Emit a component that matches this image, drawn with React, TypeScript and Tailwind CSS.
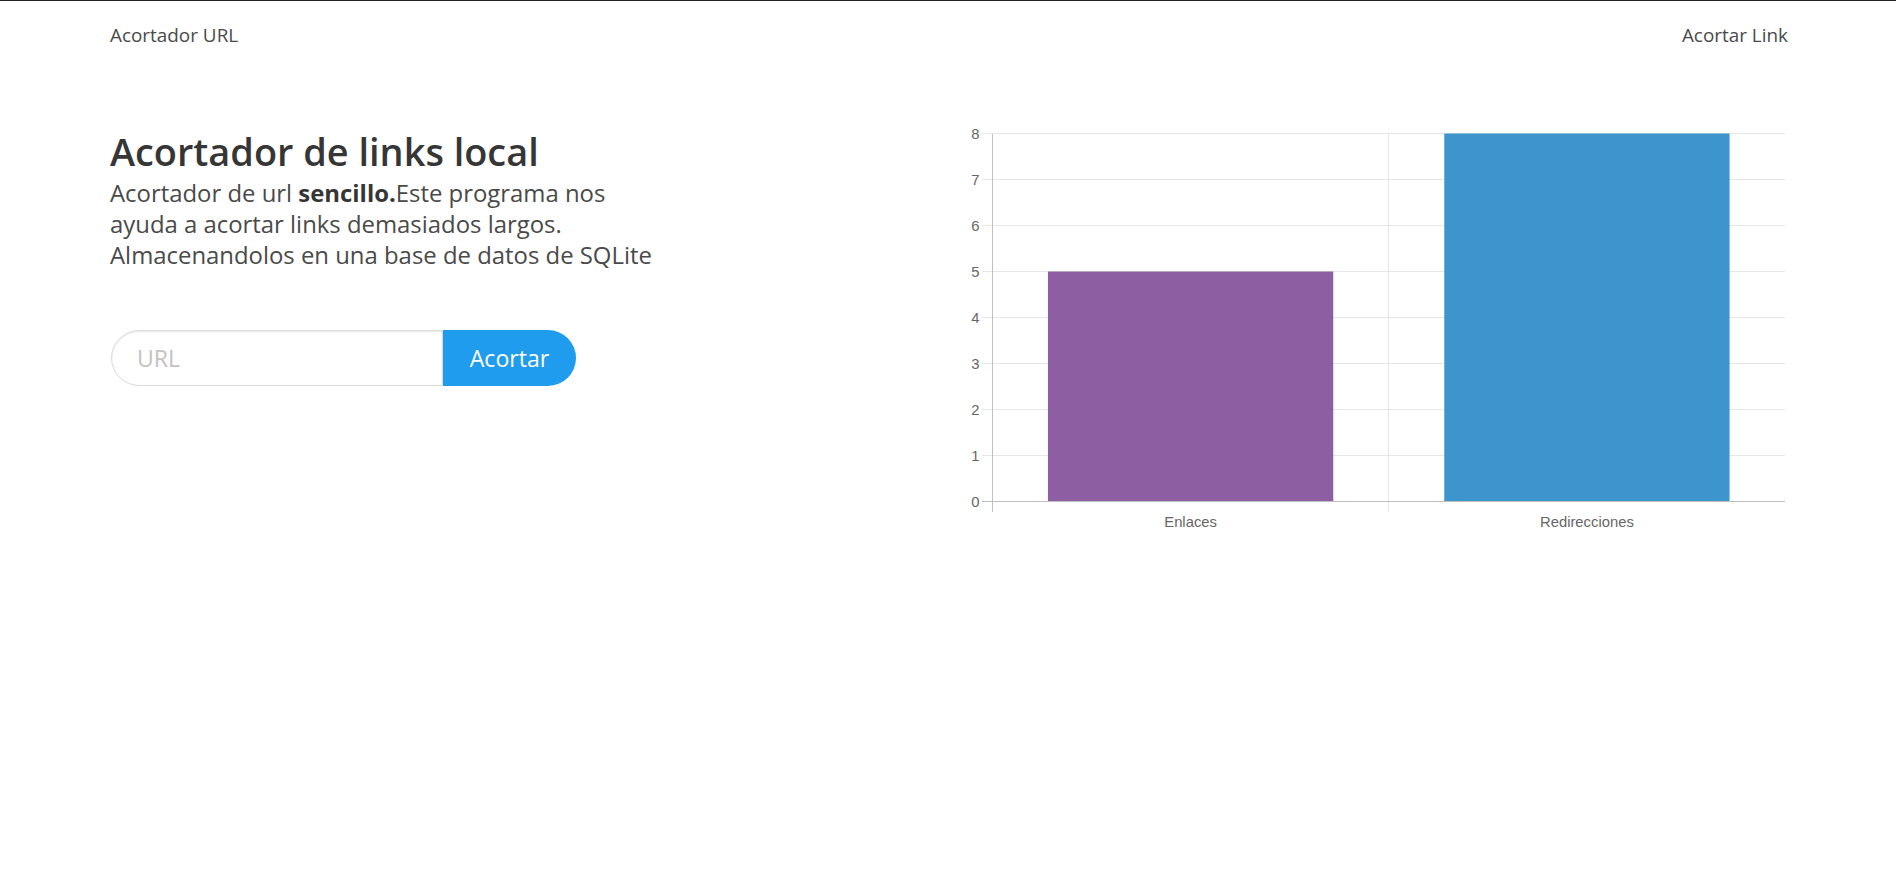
import React from "react";

const FONT = { fontFamily: '"Open Sans", "Noto Sans", sans-serif' };

function Chart() {
  const off = 10;
  const top = 3.5 + off;
  const bottom = 371.5 + off;
  const step = 46;
  const left = 44.5;
  const right = 837;
  const mid = 440.5;
  const ticks = [0, 1, 2, 3, 4, 5, 6, 7, 8];
  const barW = 285.3;
  const bars = [
    { label: "Enlaces", value: 5, color: "#8e5ea2", cx: 242.6 },
    { label: "Redirecciones", value: 8, color: "#3e95cd", cx: 638.9 },
  ];
  return (
    <svg width={840} height={420} viewBox="0 0 840 420" className="block">
      {ticks.map((k) => {
        const y = bottom - step * k;
        return (
          <line
            key={"h" + k}
            x1={34}
            x2={right}
            y1={y}
            y2={y}
            stroke={k === 0 ? "#bfbfbf" : "#e6e6e6"}
            strokeWidth={1}
            shapeRendering="crispEdges"
          />
        );
      })}
      <line x1={mid} x2={mid} y1={top} y2={bottom + 10.5} stroke="#e6e6e6" strokeWidth={1} shapeRendering="crispEdges" />
      {bars.map((b) => {
        const h = b.value * step;
        return (
          <rect
            key={b.label}
            x={b.cx - barW / 2}
            y={bottom - h}
            width={barW}
            height={h - 0.5}
            fill={b.color}
          />
        );
      })}
      <line x1={left} x2={left} y1={top} y2={bottom + 10.5} stroke="#bfbfbf" strokeWidth={1} shapeRendering="crispEdges" />
      <line x1={left} x2={right} y1={bottom} y2={bottom} stroke="#bfbfbf" strokeWidth={1} shapeRendering="crispEdges" />
      {ticks.map((k) => (
        <text
          key={"t" + k}
          x={31.5}
          y={bottom - step * k + 5.3}
          textAnchor="end"
          fill="#666"
          fontSize={14.8}
          fontFamily='"Liberation Sans", Arial, sans-serif'
        >
          {k}
        </text>
      ))}
      {bars.map((b) => (
        <text
          key={"l" + b.label}
          x={b.cx}
          y={397 + off}
          textAnchor="middle"
          fill="#666"
          fontSize={14.8}
          fontFamily='"Liberation Sans", Arial, sans-serif'
        >
          {b.label}
        </text>
      ))}
    </svg>
  );
}

export default function App() {
  return (
    <div className="min-h-screen w-full bg-white border-t border-[#222]" style={FONT}>
      <div className="mx-auto w-[1680px]">
        <nav className="flex items-center justify-between pt-[19px] text-[18.9px] leading-[30px] text-[#4a4a4a]">
          <a className="ml-[2px]">Acortador URL</a>
          <a>Acortar Link</a>
        </nav>
        <main className="mt-[70px] flex items-start">
          <section className="w-[840px] pl-[2px] pt-[10px]">
            <h1 className="text-[37.9px] font-semibold leading-[42px] text-[#363636]">
              Acortador de links local
            </h1>
            <p className="mt-[5px] text-[23.9px] leading-[31px] text-[#4a4a4a]">
              Acortador de url <strong className="font-bold text-[#363636]">sencillo.</strong>Este programa nos
              <br />
              ayuda a acortar links demasiados largos.
              <br />
              Almacenandolos en una base de datos de SQLite
            </p>
            <form className="mt-[60px] flex h-[56px] w-[465px] ml-[1px]" onSubmit={(e) => e.preventDefault()}>
              <input
                type="text"
                placeholder="URL"
                className="h-full w-[332px] rounded-l-full border border-[#dbdbdb] bg-white pl-[25px] text-[23.1px] text-[#363636] shadow-[inset_0_1px_2px_rgba(10,10,10,0.1)] outline-none placeholder:text-[#c2c2c2]"
                style={FONT}
              />
              <button
                type="submit"
                className="h-full w-[133px] rounded-r-full bg-[#209cee] text-[23.1px] text-white"
                style={FONT}
              >
                Acortar
              </button>
            </form>
          </section>
          <section className="w-[840px]">
            <Chart />
          </section>
        </main>
      </div>
    </div>
  );
}
